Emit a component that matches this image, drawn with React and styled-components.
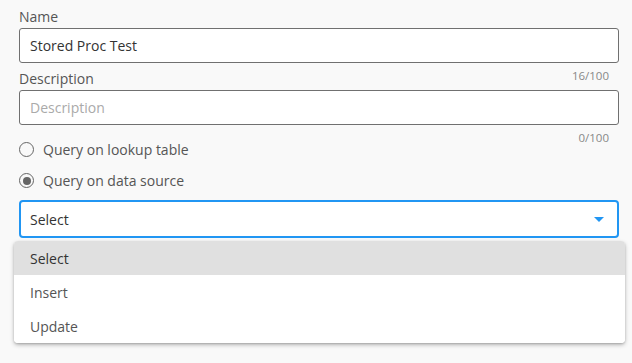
import React, { useState } from "react";
import styled, { createGlobalStyle } from "styled-components";

const GlobalStyle = createGlobalStyle`
  html, body {
    margin: 0;
    padding: 0;
    background: #f9f9f9;
    font-family: "Open Sans", "Noto Sans", sans-serif;
  }
  * {
    box-sizing: border-box;
  }
`;

const options = ["Select", "Insert", "Update"];

function App() {
  const [queryType, setQueryType] = useState("source");
  const [name] = useState("Stored Proc Test");

  return (
    <>
      <GlobalStyle />
      <Form>
        <Label>Name</Label>
        <TextInput value={name} readOnly />
        <Counter>{name.length}/100</Counter>

        <Label>Description</Label>
        <TextInput placeholder="Description" readOnly />
        <Counter>0/100</Counter>

        <RadioGroup>
          <RadioRow onClick={() => setQueryType("lookup")}>
            <RadioCircle checked={queryType === "lookup"} />
            <span>Query on lookup table</span>
          </RadioRow>
          <RadioRow onClick={() => setQueryType("source")}>
            <RadioCircle checked={queryType === "source"} />
            <span>Query on data source</span>
          </RadioRow>
        </RadioGroup>

        <SelectWrap>
          <SelectBox>
            <span>Select</span>
            <svg width="10" height="5" viewBox="0 0 10 5">
              <path d="M0 0 L10 0 L5 5 Z" fill="#2196f3" />
            </svg>
          </SelectBox>
          <Menu>
            {options.map((opt, i) => (
              <MenuItem key={opt} active={i === 0}>
                {opt}
              </MenuItem>
            ))}
          </Menu>
        </SelectWrap>
      </Form>
    </>
  );
}

export default App;

const Form = styled.div`
  width: 632px;
  height: 363px;
  padding: 8px 13px 0 19px;
  display: flex;
  flex-direction: column;
`;

const Label = styled.div`
  font-size: 14px;
  line-height: 18px;
  padding-bottom: 2px;
  color: #555;
`;

const TextInput = styled.input`
  display: block;
  width: 600px;
  height: 35px;
  padding: 0 10px;
  border: 1px solid #707070;
  border-radius: 3px;
  background: #fff;
  font-family: inherit;
  font-size: 14px;
  color: #333;
  outline: none;

  &::placeholder {
    color: #aaa;
  }
`;

const Counter = styled.div`
  width: 600px;
  margin-top: 6px;
  margin-bottom: -13px;
  padding-right: 10px;
  height: 14px;
  text-align: right;
  font-size: 11.5px;
  line-height: 14px;
  color: #888;
`;

const RadioGroup = styled.div`
  margin-top: 2px;
  display: flex;
  flex-direction: column;
`;

const RadioRow = styled.label`
  display: flex;
  align-items: center;
  gap: 9px;
  height: 31px;
  font-size: 14px;
  color: #555;
  cursor: pointer;
`;

const RadioCircle = styled.span`
  width: 15px;
  height: 15px;
  border-radius: 50%;
  border: 1.5px solid #666;
  display: flex;
  align-items: center;
  justify-content: center;

  &::after {
    content: "";
    width: 8px;
    height: 8px;
    border-radius: 50%;
    background: #666;
    display: ${(p) => (p.checked ? "block" : "none")};
  }
`;

const SelectWrap = styled.div`
  position: relative;
  width: 600px;
  margin-top: 4px;
`;

const SelectBox = styled.div`
  height: 38px;
  border: 2px solid #2196f3;
  border-radius: 4px;
  background: #fff;
  display: flex;
  align-items: center;
  justify-content: space-between;
  padding: 0 13px 0 9px;
  font-size: 14px;
  color: #333;
`;

const Menu = styled.div`
  position: absolute;
  top: calc(100% + 3px);
  left: -5px;
  right: -6px;
  background: #fff;
  border-radius: 4px;
  overflow: hidden;
  box-shadow: 0 2px 4px rgba(0, 0, 0, 0.25), 0 1px 2px rgba(0, 0, 0, 0.15);
`;

const MenuItem = styled.div`
  height: 34px;
  display: flex;
  align-items: center;
  padding-left: 16px;
  font-size: 14px;
  color: ${(p) => (p.active ? "#333" : "#555")};
  background: ${(p) => (p.active ? "#e0e0e0" : "#fff")};
`;
